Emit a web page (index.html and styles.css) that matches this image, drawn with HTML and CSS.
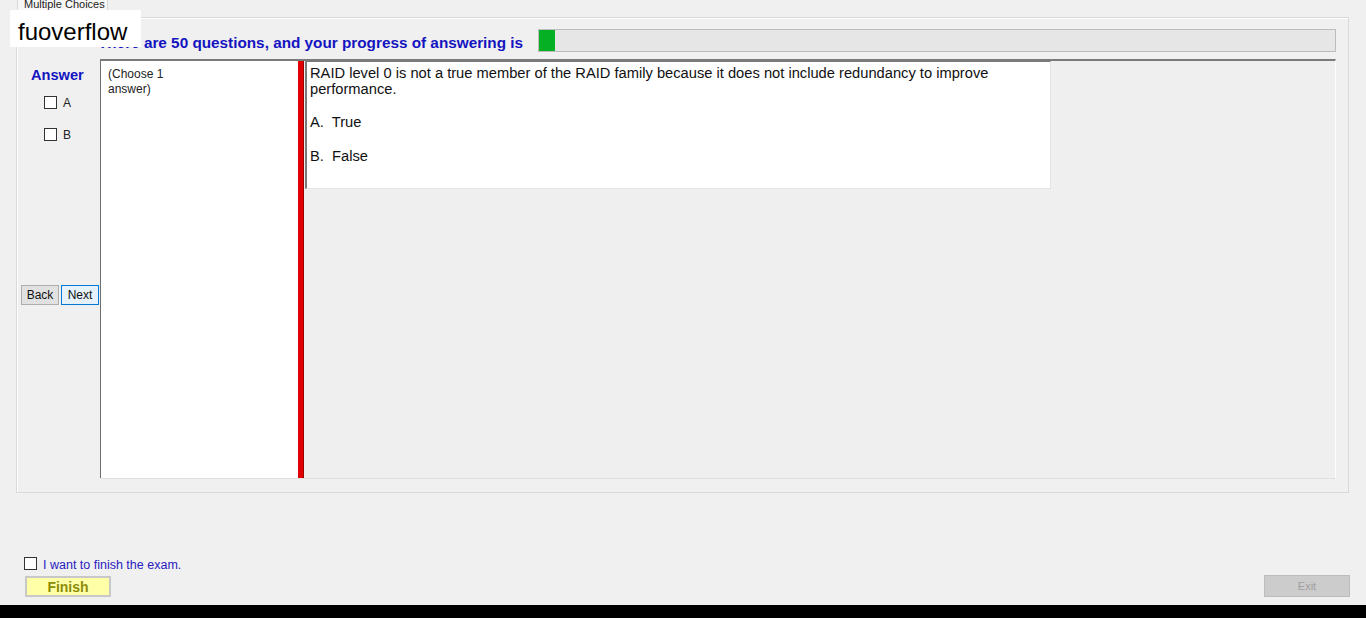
FILE: index.html
```html
<!DOCTYPE html>
<html>
<head>
<meta charset="utf-8">
<link rel="stylesheet" href="styles.css">
</head>
<body>
<div class="watermark">fuoverflow</div>
<div class="tabs"><div class="tab">Multiple Choices</div></div>
<div class="tabpage">
  <div class="header">
    <div class="heading">There are 50 questions, and your progress of answering is</div>
    <div class="progress"><div class="fill" style="width:16px"></div></div>
  </div>
  <div class="main">
    <div class="leftcol">
      <div class="answer-title">Answer</div>
      <label class="opt"><span class="box"></span><span>A</span></label>
      <label class="opt opt-b"><span class="box"></span><span>B</span></label>
      <div class="navbtns">
        <button class="btn back">Back</button>
        <button class="btn next">Next</button>
      </div>
    </div>
    <div class="panel">
      <div class="choose">(Choose 1<br>answer)</div>
      <div class="splitter"></div>
      <div class="content">
        <div class="question">
          <p class="qtext">RAID level 0 is not a true member of the RAID family because it does not include redundancy to improve performance.</p>
          <p class="qopt a">A.&nbsp; True</p>
          <p class="qopt b">B.&nbsp; False</p>
        </div>
      </div>
    </div>
  </div>
</div>
<div class="footer">
  <div class="finish-col">
    <label class="confirm"><span class="box"></span><span class="confirm-text">I want to finish the exam.</span></label>
    <button class="finish">Finish</button>
  </div>
  <button class="exit">Exit</button>
</div>
<div class="blackbar"></div>
</body>
</html>
```

FILE: styles.css
```css
* { box-sizing: border-box; }
html, body { margin: 0; padding: 0; }
body {
  width: 1366px;
  height: 618px;
  overflow: hidden;
  background: #f0f0f0;
  font-family: "Liberation Sans", Arial, sans-serif;
  display: flex;
  flex-direction: column;
  position: relative;
}
.watermark {
  position: absolute;
  top: 10px;
  left: 10px;
  width: 131px;
  height: 37px;
  background: #ffffff;
  font-size: 24px;
  line-height: 30px;
  padding: 7px 0 0 8px;
  color: #000;
  z-index: 5;
}
.tabs {
  height: 17px;
  padding-left: 17px;
  flex: none;
}
.tab {
  width: 91px;
  height: 17px;
  background: #f7f7f7;
  border: 1px solid #d9d9d9;
  border-top: none;
  border-bottom: none;
  font-size: 11px;
  line-height: 9px;
  padding-left: 6px;
  color: #222;
  overflow: hidden;
  white-space: nowrap;
}
.tabpage {
  flex: none;
  margin-left: 16px;
  width: 1333px;
  height: 476px;
  border: 1px solid #d9d9d9;
  box-shadow: inset 1px 1px 0 #ffffff;
  padding: 11px 12px 13px 4px;
}
.header {
  display: flex;
  align-items: center;
  height: 23px;
  padding-left: 77px;
}
.heading {
  font-size: 15.3px;
  font-weight: bold;
  color: #1414c0;
  width: 440px;
  white-space: nowrap;
  padding-top: 5px;
}
.progress {
  width: 798px;
  height: 23px;
  background: #e6e6e6;
  border: 1px solid #bcbcbc;
}
.fill {
  height: 100%;
  background: #06b025;
}
.main {
  display: flex;
  margin-top: 7px;
  height: 420px;
}
.leftcol {
  width: 79px;
  flex: none;
  display: flex;
  flex-direction: column;
  padding-top: 8px;
}
.answer-title {
  font-size: 14.6px;
  font-weight: bold;
  color: #1414c0;
  line-height: 16px;
  padding-left: 10px;
}
.opt {
  display: flex;
  align-items: center;
  gap: 6px;
  margin-top: 13px;
  margin-left: 23px;
  font-size: 12px;
  color: #222;
  height: 13px;
}
.opt-b { margin-top: 19px; }
.box {
  width: 13px;
  height: 13px;
  border: 1px solid #333;
  background: #fff;
  flex: none;
}
.navbtns {
  display: flex;
  gap: 2px;
  margin-top: 144px;
}
.btn {
  width: 38px;
  height: 20px;
  font-family: "Liberation Sans", Arial, sans-serif;
  font-size: 12px;
  padding: 0;
  color: #111;
}
.back {
  background: #e1e1e1;
  border: 1px solid #adadad;
}
.next {
  background: #e5f1fb;
  border: 1px solid #0078d7;
}
.panel {
  flex: 1;
  display: flex;
  border-top: 2px solid #7a7a7a;
  border-right: 1px solid #fdfdfd;
  border-bottom: 1px solid #e0e0e0;
  background: #efefef;
}
.choose {
  width: 198px;
  flex: none;
  background: #fff;
  border-left: 1px solid #6d6d6d;
  font-size: 12px;
  line-height: 15px;
  padding: 6px 0 0 7px;
  color: #222;
}
.splitter {
  width: 6px;
  flex: none;
  background: #e00000;
  border-right: 1px solid #9a0000;
}
.content {
  flex: 1;
  padding-left: 1px;
}
.question {
  width: 746px;
  height: 128px;
  background: #fff;
  border-left: 2px solid #7a7a7a;
  border-top: 1px solid #7a7a7a;
  border-right: 1px solid #e3e3e3;
  border-bottom: 1px solid #e3e3e3;
  padding: 3px 0 0 3px;
  font-size: 14.7px;
  line-height: 16px;
  color: #111;
}
.question p { margin: 0; }
.qopt.a { margin-top: 17px; }
.qopt.b { margin-top: 18px; }
.footer {
  margin-top: auto;
  display: flex;
  justify-content: space-between;
  align-items: flex-end;
  padding: 0 16px 8px 24px;
}
.finish-col {
  display: flex;
  flex-direction: column;
}
.confirm {
  display: flex;
  align-items: center;
  gap: 6px;
  height: 14px;
}
.confirm-text {
  font-size: 12.5px;
  color: #2a20c0;
  padding-top: 3px;
}
.finish {
  margin-top: 6px;
  margin-left: 1px;
  width: 86px;
  height: 21px;
  background: #ffffa8;
  border: 2px solid #c8c8c8;
  font-family: "Liberation Sans", Arial, sans-serif;
  font-weight: bold;
  font-size: 14px;
  color: #8c8c08;
  padding: 0;
}
.exit {
  width: 86px;
  height: 22px;
  background: #cccccc;
  border: 1px solid #bcbcbc;
  font-family: "Liberation Sans", Arial, sans-serif;
  font-size: 11px;
  color: #a0a0a0;
  padding: 0;
}
.blackbar {
  flex: none;
  height: 13px;
  background: #000;
}
```
